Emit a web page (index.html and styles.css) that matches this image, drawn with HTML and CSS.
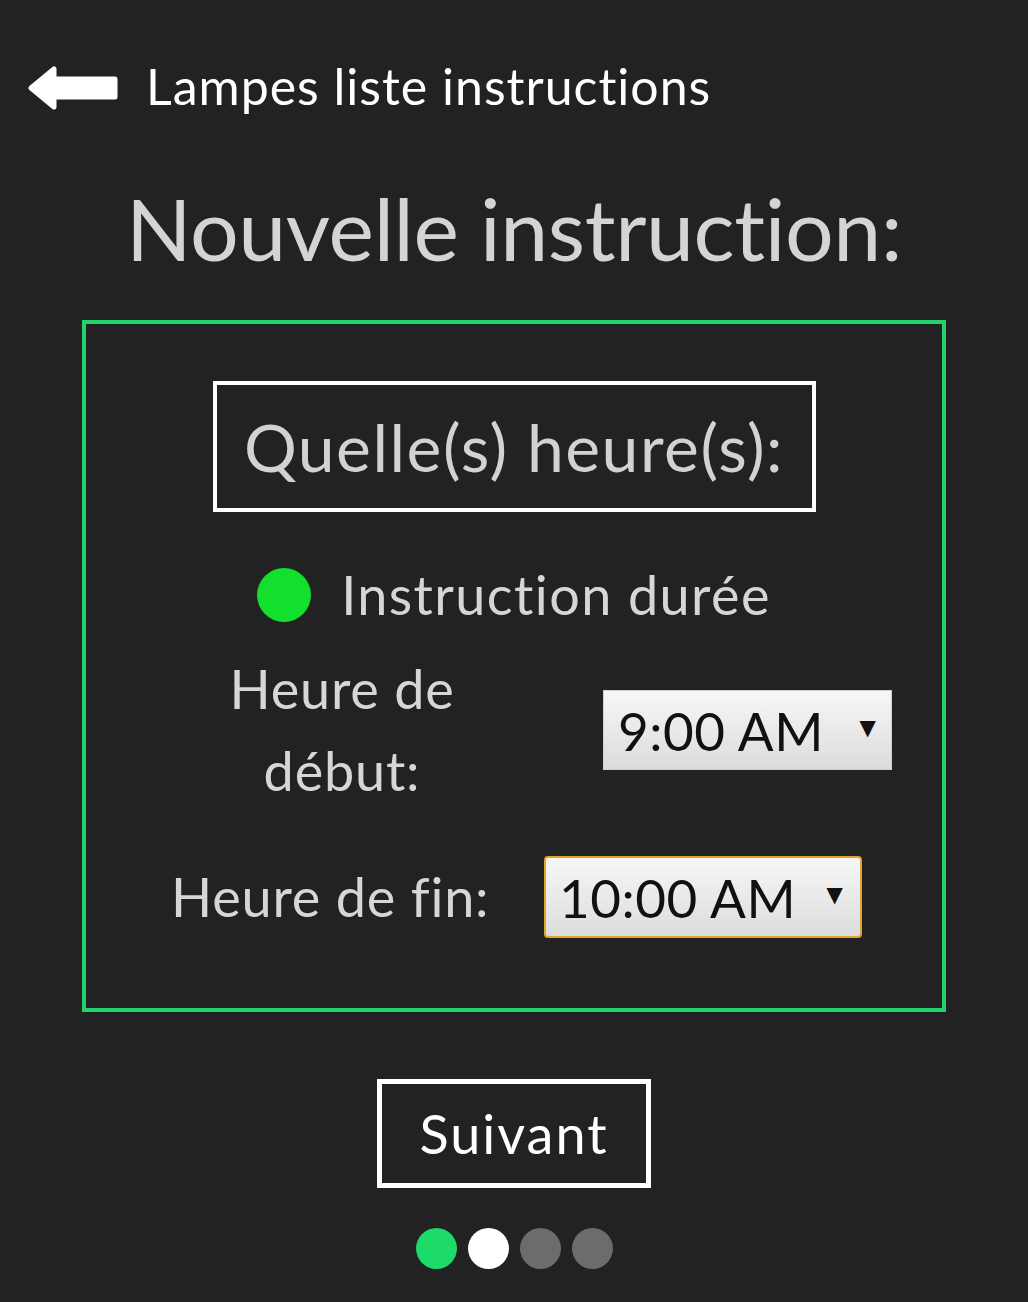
FILE: index.html
```html
<!DOCTYPE html>
<html lang="fr">
<head>
<meta charset="utf-8">
<title>Nouvelle instruction</title>
<link rel="stylesheet" href="styles.css">
</head>
<body>
<header class="topbar">
  <svg class="back" viewBox="0 0 90 44" width="90" height="44" aria-hidden="true">
    <path d="M3 22 L26 3 L26 13 L87 13 L87 31 L26 31 L26 41 Z" fill="#fff" stroke="#fff" stroke-width="5" stroke-linejoin="round"/>
  </svg>
  <span class="crumb">Lampes liste instructions</span>
</header>
<h1 class="title">Nouvelle instruction:</h1>
<section class="panel">
  <div class="question">Quelle(s) heure(s):</div>
  <div class="option"><span class="radio"></span><span class="option-text">Instruction durée</span></div>
  <div class="row row-start">
    <div class="lbl lbl-start">Heure de<br>début:</div>
    <div class="select select-start"><span class="val">9:00 AM</span><span class="caret">▼</span></div>
  </div>
  <div class="row row-end">
    <div class="lbl lbl-end">Heure de fin:</div>
    <div class="select select-end"><span class="val">10:00 AM</span><span class="caret">▼</span></div>
  </div>
</section>
<div class="actions"><button class="next">Suivant</button></div>
<div class="dots">
  <span class="dot dot-green"></span>
  <span class="dot dot-white"></span>
  <span class="dot dot-gray"></span>
  <span class="dot dot-gray"></span>
</div>
</body>
</html>
```
FILE: styles.css
```css
html, body {
  margin: 0;
  padding: 0;
}
body {
  background: #222222;
  font-family: "Lato", "Open Sans", sans-serif;
  font-weight: 400;
  color: #d6d6d6;
  width: 1028px;
  height: 1302px;
  overflow: hidden;
}
.topbar {
  display: flex;
  align-items: center;
  padding: 66px 0 0 28px;
  height: 44px;
}
.back {
  display: block;
  flex: none;
}
.crumb {
  margin-left: 28px;
  font-size: 50px;
  line-height: 44px;
  letter-spacing: 1px;
  color: #ffffff;
  position: relative;
  top: -2px;
}
.title {
  margin: 75px 0 0;
  font-size: 86px;
  line-height: 86px;
  font-weight: 400;
  letter-spacing: -0.4px;
  text-align: center;
  color: #d4d4d4;
}
.panel {
  box-sizing: border-box;
  width: 864px;
  margin: 49px auto 0;
  border: 4px solid #22d36b;
  padding: 57px 0 70px;
}
.question {
  box-sizing: border-box;
  width: 603px;
  height: 131px;
  margin: 0 auto;
  border: 4px solid #ffffff;
  display: flex;
  align-items: center;
  justify-content: center;
  font-size: 66px;
  letter-spacing: 1.5px;
  color: #d2d2d2;
}
.option {
  display: flex;
  align-items: center;
  justify-content: center;
  margin-top: 56px;
  height: 54px;
}
.radio {
  width: 54px;
  height: 54px;
  border-radius: 50%;
  background: #12e02c;
  flex: none;
}
.option-text {
  margin-left: 30px;
  font-size: 54px;
  line-height: 54px;
  letter-spacing: 1.4px;
  color: #d6d6d6;
}
.row {
  display: flex;
  align-items: center;
}
.row-start {
  margin-top: 26px;
  padding-left: 106px;
}
.row-end {
  margin-top: 44px;
  padding-left: 85px;
}
.lbl {
  font-size: 54px;
  line-height: 82px;
  letter-spacing: 0.8px;
  color: #d6d6d6;
}
.lbl-start {
  width: 300px;
  text-align: center;
}
.lbl-end {
  width: 373px;
  white-space: nowrap;
}
.select {
  box-sizing: border-box;
  display: flex;
  align-items: center;
  justify-content: space-between;
  background: linear-gradient(#f7f7f7, #dcdcdc);
  color: #111111;
  font-family: "Lato", sans-serif;
  font-weight: 400;
  font-size: 53px;
  letter-spacing: 0.5px;
}
.select-start {
  margin-left: 111px;
  width: 289px;
  height: 80px;
  border: 1px solid #cfcfcf;
  padding: 0 9px 0 14px;
}
.select-end {
  width: 318px;
  height: 82px;
  border: 2px solid #e6a22c;
  border-radius: 4px;
  padding: 0 11px 0 13px;
}
.caret {
  font-size: 28px;
  line-height: 28px;
  margin-top: -8px;
}
.actions {
  display: flex;
  justify-content: center;
  margin-top: 67px;
}
.next {
  box-sizing: border-box;
  width: 274px;
  height: 109px;
  background: transparent;
  border: 5px solid #ffffff;
  color: #ffffff;
  font-family: "Lato", sans-serif;
  font-weight: 400;
  font-size: 54px;
  letter-spacing: 2px;
  padding: 0;
}
.dots {
  display: flex;
  justify-content: center;
  gap: 11px;
  margin-top: 40px;
}
.dot {
  width: 41px;
  height: 41px;
  border-radius: 50%;
}
.dot-green { background: #1ddb68; }
.dot-white { background: #ffffff; }
.dot-gray { background: #6c6c6c; }
```
